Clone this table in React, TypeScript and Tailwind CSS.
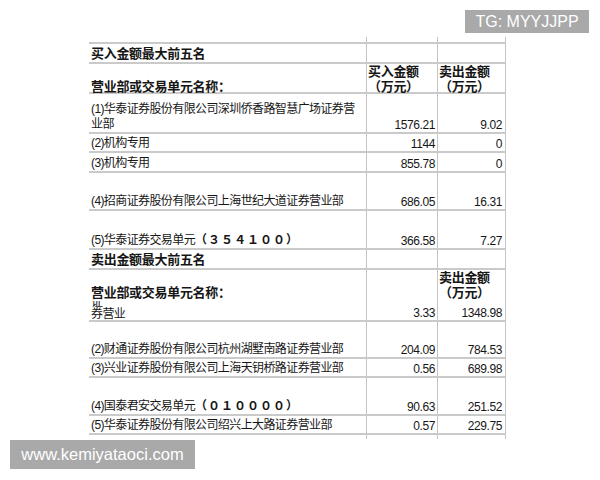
import React from 'react';
import clsx from 'clsx';

type Trade = {
  name: React.ReactNode;
  buy: string;
  sell: string;
  h: string;
};

const buyTop: Trade[] = [
  { name: <>(1)华泰证券股份有限公司深圳侨香路智慧广场证券营<br />业部</>, buy: '1576.21', sell: '9.02', h: 'h-[40px]' },
  { name: '(2)机构专用', buy: '1144', sell: '0', h: 'h-[19px]' },
  { name: '(3)机构专用', buy: '855.78', sell: '0', h: 'h-[20px]' },
  { name: '(4)招商证券股份有限公司上海世纪大道证券营业部', buy: '686.05', sell: '16.31', h: 'h-[38px]' },
  { name: <>(5)华泰证券交易单元<span className="font-bold tracking-[1px]">（３５４１００）</span></>, buy: '366.58', sell: '7.27', h: 'h-[39px]' },
];

const sellTop: Trade[] = [
  { name: '(2)财通证券股份有限公司杭州湖墅南路证券营业部', buy: '204.09', sell: '784.53', h: 'h-[37px]' },
  { name: '(3)兴业证券股份有限公司上海天钥桥路证券营业部', buy: '0.56', sell: '689.98', h: 'h-[19px]' },
  { name: <>(4)国泰君安交易单元<span className="font-bold tracking-[1px]">（０１００００）</span></>, buy: '90.63', sell: '251.52', h: 'h-[38px]' },
  { name: '(5)华泰证券股份有限公司绍兴上大路证券营业部', buy: '0.57', sell: '229.75', h: 'h-[19px]' },
];

const line = 'border-b-2 border-[#cacaca]';
const vline = 'border-l border-[#c4c4c4]';

function Row({ h, border = true, children }: { h: string; border?: boolean; children: React.ReactNode }) {
  return <div className={clsx('grid grid-cols-[277px_71px_69px]', h, border && line)}>{children}</div>;
}

function Cells({ name, buy, sell, clip }: { name: React.ReactNode; buy?: React.ReactNode; sell?: React.ReactNode; clip?: boolean }) {
  return (
    <>
      <div className={clsx('flex items-end pl-[2px] leading-[15px] tracking-[-0.6px]', clip && 'overflow-hidden')}>
        <div>{name}</div>
      </div>
      <div className={clsx(vline, 'flex items-end justify-end pr-[2px] leading-[14px] tracking-[-0.4px]')}>{buy}</div>
      <div className={clsx(vline, 'border-r border-r-[#c4c4c4] flex items-end justify-end pr-[3px] leading-[14px] tracking-[-0.4px]')}>{sell}</div>
    </>
  );
}

function Head({ children }: { children: React.ReactNode }) {
  return <div className="font-bold text-[13px] leading-[15px] tracking-[-0.3px] pl-[2px] pb-[2px]">{children}</div>;
}

export default function App() {
  return (
    <div className="relative w-[600px] h-[480px] overflow-hidden bg-white text-[#161616] text-[12px] font-['Liberation_Sans','Noto_Sans_CJK_SC',sans-serif]">
      <div className="pt-[37px] pl-[89px] flex flex-col w-fit">
        <Row h="h-[7px]"><Cells name="" /></Row>

        <Row h="h-[20px]">
          <Cells name={<span className="font-bold text-[13px] tracking-[-0.3px]">买入金额最大前五名</span>} />
        </Row>
        <Row h="h-[30px]">
          <Cells name="" />
        </Row>
        {buyTop.map((r, i) => (
          <Row key={i} h={r.h}>
            <Cells name={r.name} buy={r.buy} sell={r.sell} />
          </Row>
        ))}

        <Row h="h-[20px]">
          <Cells name={<span className="font-bold text-[13px] tracking-[-0.3px]">卖出金额最大前五名</span>} />
        </Row>
        <Row h="h-[31px]" border={false}>
          <Cells name="" />
        </Row>
        <Row h="h-[21px]">
          <Cells
            clip
            name={<span className="block leading-[12px]">(1)华泰证券股份有限公司杭州西湖区文三路国贸中心证<br />券营业</span>}
            buy="3.33"
            sell="1348.98"
          />
        </Row>
        {sellTop.map((r, i) => (
          <Row key={i} h={r.h}>
            <Cells name={r.name} buy={r.buy} sell={r.sell} />
          </Row>
        ))}
        <Row h="h-[4px]" border={false}><Cells name="" /></Row>
      </div>

      {/* header labels laid over the empty header rows */}
      <div className="absolute left-[89px] top-[64px] w-[417px] h-[28px] grid grid-cols-[277px_71px_69px] items-end">
        <Head>营业部或交易单元名称：</Head>
        <Head>买入金额<br />（万元）</Head>
        <Head>卖出金额<br />（万元）</Head>
      </div>
      <div className="absolute left-[89px] top-[270px] w-[417px] h-[29px] grid grid-cols-[277px_71px_69px] items-end">
        <Head>营业部或交易单元名称：</Head>
        <div />
        <Head>卖出金额<br />（万元）</Head>
      </div>

      <div className="absolute left-[465px] top-[10px] w-[124px] h-[23px] bg-[#a9a9a9] text-white text-[16px] leading-[23px] text-center font-['Liberation_Sans',sans-serif]">
        TG: MYYJJPP
      </div>
      <div className="absolute left-[10px] top-[440px] w-[185px] h-[29px] bg-[#a9a9a9] text-white text-[16.5px] leading-[29px] text-center font-['Liberation_Sans',sans-serif]">
        www.kemiyataoci.com
      </div>
    </div>
  );
}
